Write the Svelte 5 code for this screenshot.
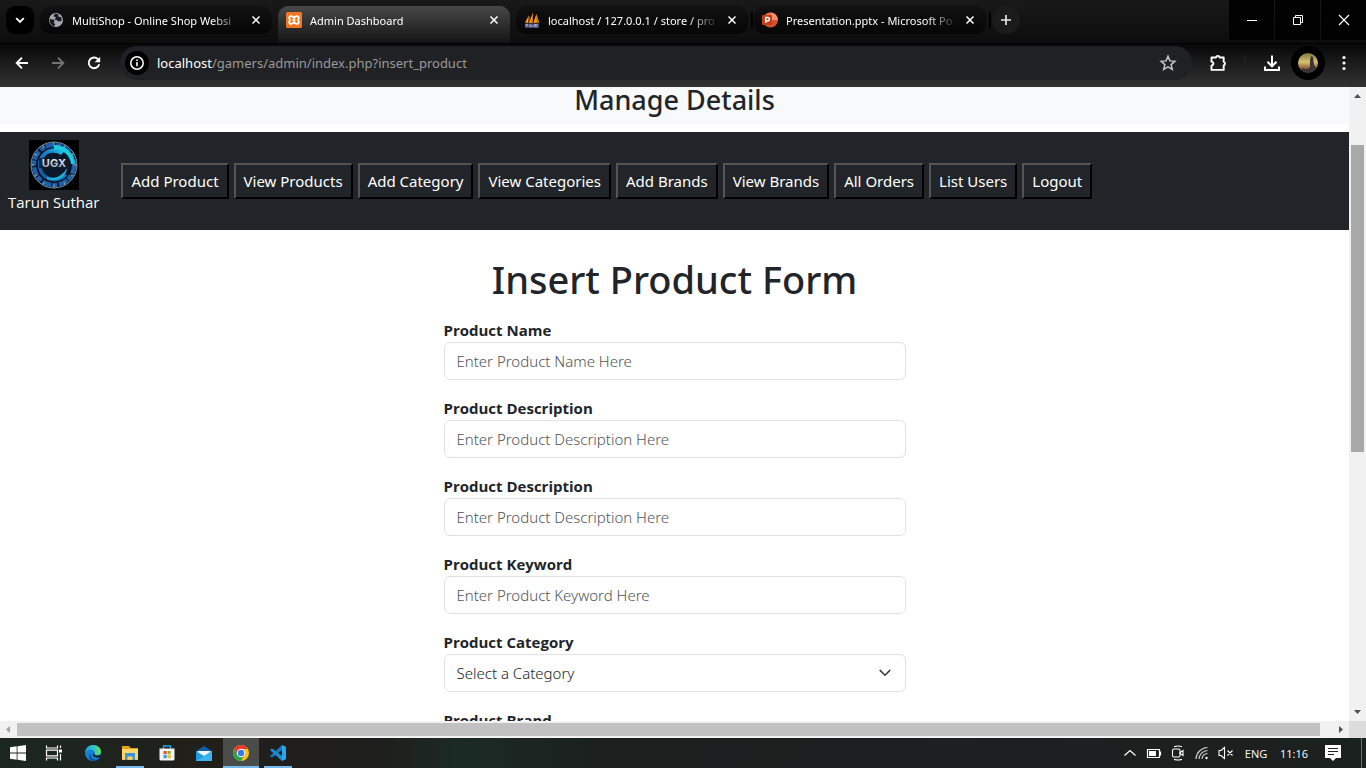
<script>
  const tabs = [
    { icon: 'globe', title: 'MultiShop - Online Shop Websi' },
    { icon: 'xampp', title: 'Admin Dashboard', active: true },
    { icon: 'pma', title: 'localhost / 127.0.0.1 / store / pro' },
    { icon: 'ppt', title: 'Presentation.pptx - Microsoft Po' },
  ];
  const links = [
    'Add Product', 'View Products', 'Add Category', 'View Categories',
    'Add Brands', 'View Brands', 'All Orders', 'List Users', 'Logout',
  ];
  const fields = [
    { id: 'name', label: 'Product Name', hint: 'Enter Product Name Here' },
    { id: 'description', label: 'Product Description', hint: 'Enter Product Description Here' },
    { id: 'details', label: 'Product Description', hint: 'Enter Product Description Here' },
    { id: 'keyword', label: 'Product Keyword', hint: 'Enter Product Keyword Here' },
  ];
  const spokes = [0, 30, 60, 90, 120, 150, 180, 210, 240, 270, 300, 330];
</script>

<div class="window">
  <header class="tabstrip">
    <button class="tab-search" aria-label="Search tabs">
      <svg width="12" height="12" viewBox="0 0 12 12"><path d="M2.2 4.2 6 8l3.800-3.800" fill="none" stroke="#fff" stroke-width="1.900" /></svg>
    </button>
    <div class="tabs">
      {#each tabs as tab}
        <div class="tab" class:active={tab.active}>
          <svg class="favicon" width="16" height="16" viewBox="0 0 16 16">
            {#if tab.icon === 'globe'}
              <circle cx="8" cy="8" r="7" fill="#a4a9b0" />
              <path d="M6.500 1.800c.3 1.300-.9 1.500-1 2.700 1.100.3 2 .1 2.300 1.200.2.900-1.400.9-1.200 2 1.700-.2 2.800.3 3.200 1.500h3.400c.6-1.300.3-3.400-.2-4.400-1 .5-1.800.3-2.400-.4-.7-.8.3-1.600-.8-2.500zM1.800 6.900c1.800.2 4 .4 4.600 1.500.5 1-.3 1.700-.8 2.100.3.9.6 1.200 1.500 1.200l-.3 2.400C3.900 13.500 1.300 11 1.800 6.900z" fill="#17191c" />
            {:else if tab.icon === 'xampp'}
              <rect width="16" height="16" rx="1.500" fill="#f37623" />
              <path d="M8 6.200C7 3.600 3.200 3.300 3.200 5.800c0 1 .7 1.600.7 2.200s-.7 1.200-.7 2.200C3.200 12.700 7 12.400 8 9.800c1 2.600 4.800 2.900 4.800.4 0-1-.7-1.600-.7-2.200s.7-1.200.7-2.200C12.800 3.300 9 3.600 8 6.200z" fill="none" stroke="#fff" stroke-width="1.800" stroke-linejoin="round" />
              <path d="M6.500 8h3" stroke="#fff" stroke-width="1.600" />
            {:else if tab.icon === 'pma'}
              <path d="M1 10.500 4.800 3.500 4 11zM4.800 11 9 .5 8.600 11zM9.300 11 12.300 2l2.900 8.500z" fill="#f89c0e" />
              <path d="M4.800 3.500 6 6l-2 5zM7.300 11 9 .5v10.500zM12.300 2l2.900 8.500h-2.400z" fill="#c06b16" />
              <path d="M.5 11.500h15l-1 4.500H1.500z" fill="#4b5070" />
              <path d="M2 15v-2.500h1.500v1.500M6 12v3M6 13.500h2V15M10 15v-2.500h3V15M11.500 13v2" fill="none" stroke="#a9acd0" stroke-width=".9" />
            {:else}
              <circle cx="8.500" cy="8" r="7.500" fill="#d35230" />
              <path d="M8.500.5A7.500 7.500 0 0 1 16 8H8.500z" fill="#ff8f6b" />
              <path d="M8.500.5A7.500 7.500 0 0 0 1 8h7.500z" fill="#ed6c47" />
              <rect y="3" width="10" height="10" rx="1" fill="#c43e1c" />
              <path d="M3.700 11V5.500h1.800c2.500 0 2.500 3.500 0 3.500H3.700" fill="none" stroke="#fff" stroke-width="1.400" />
            {/if}
          </svg>
          <span class="tab-title">{tab.title}</span>
          <button class="tab-close" aria-label="Close tab">
            <svg width="12" height="12" viewBox="0 0 12 12"><path d="m2.500 2.500 7 7m0-7-7 7" stroke="#fff" stroke-width="1.500" /></svg>
          </button>
        </div>
      {/each}
    </div>
    <button class="new-tab" aria-label="New tab">
      <svg width="14" height="14" viewBox="0 0 14 14"><path d="M7 2v10M2 7h10" stroke="#e6e6e6" stroke-width="1.700" /></svg>
    </button>
    <div class="controls">
      <button aria-label="Minimise"><svg width="12" height="12" viewBox="0 0 12 12"><path d="M1 6.500h10" stroke="#fff" /></svg></button>
      <button aria-label="Restore"><svg width="12" height="12" viewBox="0 0 12 12"><path d="M1.500 3.500h7v7h-7zM3.500 3.500v-2h7v7h-2" fill="none" stroke="#fff" /></svg></button>
      <button aria-label="Close"><svg width="12" height="12" viewBox="0 0 12 12"><path d="m1 1 10 10m0-10L1 11" stroke="#fff" stroke-width="1.200" /></svg></button>
    </div>
  </header>

  <div class="toolbar">
    <div class="history">
      <button aria-label="Back"><svg width="16" height="16" viewBox="0 0 16 16"><path d="M14 8H3M8 2.700 2.700 8 8 13.300" fill="none" stroke="#fff" stroke-width="1.900" /></svg></button>
      <button aria-label="Forward"><svg width="16" height="16" viewBox="0 0 16 16"><path d="M2 8h11M8 2.700 13.300 8 8 13.300" fill="none" stroke="#747474" stroke-width="1.900" /></svg></button>
      <button aria-label="Reload"><svg width="16" height="16" viewBox="0 0 16 16"><path d="M13.200 9.200A5.300 5.300 0 1 1 12 4.300l1.300 1.500" fill="none" stroke="#fff" stroke-width="1.900" /><path d="M14.200 1.700v5.600H8.600z" fill="#fff" /></svg></button>
    </div>
    <div class="omnibox">
      <button class="site-info" aria-label="Site information">
        <svg width="16" height="16" viewBox="0 0 16 16"><circle cx="8" cy="8" r="6.200" fill="none" stroke="#fff" stroke-width="1.500" /><path d="M8 7v4.200M8 4.500v1.600" stroke="#fff" stroke-width="1.600" /></svg>
      </button>
      <span class="url"><b>localhost</b>/gamers/admin/index.php?insert_product</span>
      <button class="bookmark" aria-label="Bookmark this tab">
        <svg width="18" height="18" viewBox="0 0 18 18"><path d="m9 2.200 1.900 4.700 5 .4-3.800 3.300 1.200 4.900L9 12.900l-4.300 2.600 1.200-4.900-3.800-3.300 5-.4z" fill="none" stroke="#c4c4c4" stroke-width="1.500" /></svg>
      </button>
    </div>
    <div class="actions">
      <button aria-label="Extensions"><svg width="20" height="20" viewBox="0 0 20 20"><path d="M3.500 4.500H8a1.900 1.900 0 0 1 3.700 0h4v4.300a1.900 1.900 0 0 1 0 3.600v4.500H3.500v-4.300c2.600-.7 2.600-3.200 0-3.900z" fill="none" stroke="#fff" stroke-width="1.900" stroke-linejoin="round" /></svg></button>
      <span class="divider"></span>
      <button aria-label="Downloads"><svg width="18" height="18" viewBox="0 0 18 18"><path d="M9 1.500V12M4.500 7.800 9 12.300l4.500-4.500M2 12.500V16h14v-3.500" fill="none" stroke="#fff" stroke-width="2" /></svg></button>
      <button class="profile" aria-label="Profile">
        <svg width="20" height="20" viewBox="0 0 20 20">
          <defs>
            <linearGradient id="sky" x2="0" y2="1"><stop offset="0" stop-color="#7b7440" /><stop offset=".45" stop-color="#d9c272" /><stop offset=".75" stop-color="#92643f" /><stop offset="1" stop-color="#35313b" /></linearGradient>
            <clipPath id="disc"><circle cx="10" cy="10" r="10" /></clipPath>
          </defs>
          <g clip-path="url(#disc)"><rect width="20" height="20" fill="url(#sky)" /><path d="M0 16h4l1-1 1 1h4l2-2V7l1-4 2 1 1 8 2 2v6H0z" fill="#3a3436" /></g>
        </svg>
      </button>
      <button aria-label="Menu"><svg width="16" height="16" viewBox="0 0 16 16" fill="#fff"><circle cx="8" cy="2.500" r="1.600" /><circle cx="8" cy="8" r="1.600" /><circle cx="8" cy="13.500" r="1.600" /></svg></button>
    </div>
  </div>

  <div class="viewport">
    <main class="page">
      <h3>Manage Details</h3>
      <nav>
        <a class="user" href="#profile">
          <svg width="50" height="50" viewBox="0 0 50 50">
            <defs>
              <linearGradient id="ring" x1="1" y1="0" x2="0" y2="1"><stop offset="0" stop-color="#22dcee" /><stop offset=".35" stop-color="#1688cb" /><stop offset="1" stop-color="#174a96" /></linearGradient>
              <linearGradient id="metal" x2="0" y2="1"><stop offset="0" stop-color="#fff" /><stop offset="1" stop-color="#8d99a6" /></linearGradient>
            </defs>
            <rect width="50" height="50" fill="#000" />
            <circle cx="25" cy="25" r="23" fill="#0a1c35" stroke="#7d96a5" stroke-width="1" />
            <circle cx="25" cy="25" r="20" fill="none" stroke="#1d5fa8" stroke-width="4.500" stroke-dasharray="9 2 5 1" />
            {#each spokes as angle}
              <path d="M24 2.500h2l-.5 3h-1z" fill="#6e91ab" transform="rotate({angle} 25 25)" />
            {/each}
            <circle cx="25" cy="25" r="17" fill="#0b172b" stroke="#0a0f1c" stroke-width="1.500" />
            <path d="M35 11.500A16.500 16.500 0 1 0 38 35.500l-4-2A12.500 12.500 0 1 1 32 15z" fill="url(#ring)" />
            <path d="M25 5A20 20 0 0 1 46 24h-4A17 17 0 0 0 25 9z" fill="#1fc9dc" />
            <path d="M18 37c9 3 16-2 20-9-1 10-10 14-20 11z" fill="#1eb4d8" />
            <path d="M10 18h30v10H10z" fill="#0d1a2f" opacity=".8" />
            <text x="25" y="27" text-anchor="middle" font-family="Inter, sans-serif" font-size="11" font-weight="700" fill="url(#metal)">UGX</text>
          </svg>
          <span>Tarun Suthar</span>
        </a>
        <div class="menu">
          {#each links as link}
            <button>{link}</button>
          {/each}
        </div>
      </nav>
      <h1>Insert Product Form</h1>
      <form>
        {#each fields as field}
          <div class="field">
            <label for={field.id}>{field.label}</label>
            <input id={field.id} type="text" placeholder={field.hint} />
          </div>
        {/each}
        <div class="field">
          <label for="category">Product Category</label>
          <div class="select">
            <select id="category"><option>Select a Category</option></select>
            <svg width="16" height="16" viewBox="0 0 16 16"><path d="m2.500 5 5.500 5.500L13.500 5" fill="none" stroke="#343a40" stroke-width="1.700" stroke-linecap="round" stroke-linejoin="round" /></svg>
          </div>
        </div>
        <div class="field">
          <label for="brand">Product Brand</label>
          <div class="select">
            <select id="brand"><option>Select a Brand</option></select>
          </div>
        </div>
      </form>
    </main>
    <div class="vscroll">
      <svg width="17" height="17" viewBox="0 0 17 17"><path d="M5 11h7L8.500 7z" fill="#505050" /></svg>
      <div class="vtrack"><div class="vthumb"></div></div>
      <svg width="17" height="17" viewBox="0 0 17 17"><path d="M5 6h7l-3.500 4z" fill="#505050" /></svg>
    </div>
  </div>
  <div class="hscroll">
    <svg width="17" height="17" viewBox="0 0 17 17"><path d="M10 5v7L6 8.500z" fill="#a3a3a3" /></svg>
    <div class="htrack"></div>
    <svg width="29" height="17" viewBox="0 0 29 17"><path d="M19 5v7l4-3.500z" fill="#505050" /></svg>
    <span class="corner"></span>
  </div>

  <footer class="taskbar">
    <div class="system">
      <button aria-label="Start"><svg width="16" height="16" viewBox="0 0 16 16" fill="#fff"><path d="M0 2.300 6.700 1.300v6.300H0zM7.500 1.200 16 0v7.600H7.500zM0 8.400h6.700v6.300L0 13.700zM7.500 8.400H16V16l-8.500-1.200z" /></svg></button>
      <button aria-label="Task view"><svg width="18" height="16" viewBox="0 0 18 16" fill="none" stroke="#fff" stroke-width="1.200"><path d="M1.500.5V3h11V.5M1.500 15.500V13h11v2.500M1.500 5.200h11v5.600h-11zM15.500.5V3M15.500 9v6.500" /><path d="M14 4.500h3v3h-3z" fill="#fff" stroke="none" /></svg></button>
    </div>
    <div class="apps">
      <button aria-label="Edge">
        <svg width="16" height="16" viewBox="0 0 16 16">
          <defs><linearGradient id="edge" x1="0" x2="1"><stop offset="0" stop-color="#1e9de2" /><stop offset=".55" stop-color="#2fc5c9" /><stop offset="1" stop-color="#6fdb50" /></linearGradient></defs>
          <circle cx="8" cy="8" r="8" fill="#1583d5" />
          <path d="M0 7.500C.5 3 4 0 8.200 0 13 0 16 3.200 16 6.500c0 2.500-1.800 3.800-4 3.800-1.800 0-2.700-.7-2.200-1.600C10.500 7 9 5 6.500 4.800 3.500 4.600 1 5.800 0 7.500z" fill="url(#edge)" />
          <path d="M5.500 8.500c-.5 3.500 2.500 6.500 6 6.200 1.500-.2 2.700-.9 3.500-2C13.500 15 11 16 8.500 16 4.500 16 3 11 5.500 8.500z" fill="#0c4f9a" />
          <path d="M9.800 8.700c-.5.900.5 1.800 2.400 1.800 1.200 0 2.200-.4 2.900-1l.3 2.200c-3 2-8.400.7-7.400-3z" fill="#1c211f" />
        </svg>
      </button>
      <button class="open" aria-label="File Explorer">
        <svg width="16" height="14" viewBox="0 0 16 14"><path d="M0 0h7l1.500 2H16v12H0z" fill="#e8a317" /><path d="M0 3h16v10.500H0z" fill="#ffd667" /><path d="M3 7h10v7h-2.500v-3.500h-5V14H3z" fill="#3b93dc" /></svg>
      </button>
      <button aria-label="Store">
        <svg width="16" height="16" viewBox="0 0 16 16"><path d="M4.500 4V1h7v3" fill="none" stroke="#25a9e8" stroke-width="1.300" /><path d="M.5 3.500h15V14q0 1.500-1.500 1.500H2Q.5 15.500.5 14z" fill="#f3f3f3" /><path d="M4.500 6h3.200v3.200H4.500z" fill="#e8502c" /><path d="M8.500 6h3.200v3.200H8.500z" fill="#7bb82a" /><path d="M4.500 10h3.200v3.200H4.500z" fill="#25a4e5" /><path d="M8.500 10h3.200v3.200H8.500z" fill="#fab813" /></svg>
      </button>
      <button aria-label="Mail">
        <svg width="16" height="15" viewBox="0 0 16 15"><path d="m0 5 8-5 8 5v10H0z" fill="#0e5da8" /><path d="M1.500 5h13v7h-13z" fill="#f2f6fa" /><path d="m0 5 8 5 8-5v10H0z" fill="#1f9be5" /><path d="m0 15 11.500-7L16 5v10z" fill="#38b5f1" /></svg>
      </button>
      <button class="open current" aria-label="Chrome">
        <svg width="16" height="16" viewBox="0 0 16 16"><circle cx="8" cy="8" r="8" fill="#fbc116" /><path d="M1.070 4A8 8 0 0 1 14.930 4H8L4.540 10z" fill="#e33b2e" /><path d="M1.070 4A8 8 0 0 0 8 16l3.460-6H4.540z" fill="#2da44e" /><circle cx="8" cy="8" r="4.200" fill="#fff" /><circle cx="8" cy="8" r="3.200" fill="#3b78e7" /></svg>
      </button>
      <button class="open" aria-label="Visual Studio Code">
        <svg width="16" height="16" viewBox="0 0 16 16"><path d="M12 0v5L3 12 1.500 12.300 0 11z" fill="#1279bd" /><path d="M12 16v-5L3 4l-1.500-.3L0 5z" fill="#1c8bd0" /><path d="m12 0 4 1.800v12.400L12 16z" fill="#2aa6f0" /></svg>
      </button>
    </div>
    <div class="tray">
      <button aria-label="Hidden icons"><svg width="14" height="14" viewBox="0 0 14 14"><path d="m1.500 9.500 5.500-5 5.500 5" fill="none" stroke="#fff" stroke-width="1.200" /></svg></button>
      <button aria-label="Battery"><svg width="16" height="12" viewBox="0 0 16 12"><path d="M1.500 2.500h12v8h-12zM14.500 4.500v4" fill="none" stroke="#fff" stroke-width="1.200" /><path d="M3 4h7v5H3z" fill="#fff" /></svg></button>
      <button aria-label="Meet now"><svg width="14" height="16" viewBox="0 0 14 16" fill="none" stroke="#fff" stroke-width="1.100"><path d="M3 1.800q4-1.600 8 0M3 14.200q4 1.600 8 0" /><rect x="1.500" y="4" width="7.500" height="8" rx="1.500" /><path d="m9 7.500 3-2v5l-3-2z" /></svg></button>
      <button aria-label="Network"><svg width="14" height="14" viewBox="0 0 14 14" fill="none" stroke="#c6c9c8" stroke-width="1.200"><path d="M1 13A12 12 0 0 1 12.500 1.500M4 13a9 9 0 0 1 8.500-8.500M7 13a6 6 0 0 1 5.500-5.500" /><circle cx="11.500" cy="12" r="1.200" fill="#fff" stroke="none" /></svg></button>
      <button aria-label="Volume muted"><svg width="16" height="14" viewBox="0 0 16 14" fill="none" stroke="#fff" stroke-width="1.100"><path d="M1 4.500h2l3.500-3v11l-3.500-3H1zM9.500 4.500l5 5m0-5-5 5" /></svg></button>
      <button class="lang">ENG</button>
      <button class="clock">11:16</button>
      <button class="notes" aria-label="Notifications"><svg width="16" height="16" viewBox="0 0 16 16"><path d="M0 0h16v13h-5l-3 3-3-3H0z" fill="#fff" /><path d="M3 3.500h10M3 6.500h10M3 9.500h6" stroke="#222" stroke-width="1.100" /></svg></button>
      <span class="peek"></span>
    </div>
  </footer>
</div>

<style>
  :global(body) { margin: 0; }
  .window { display: flex; flex-direction: column; height: 100vh; overflow: hidden; font-family: "Open Sans", sans-serif; background: #fff; }
  .window, .window * { box-sizing: border-box; }
  button { display: flex; align-items: center; justify-content: center; padding: 0; border: 0; background: none; color: #fff; font: inherit; white-space: nowrap; }
  svg { display: block; flex: none; }

  .tabstrip { display: flex; flex: none; height: 44px; padding: 6px 0 0 6px; background: linear-gradient(#191919, #0d0d0d); border-bottom: 1px solid #000; }
  .tab-search { flex: none; width: 28px; height: 28px; border-radius: 9px; background: #000; }
  .tabs { display: flex; gap: 6px; margin-left: 6px; }
  .tab { position: relative; display: flex; align-items: center; gap: 8px; width: 232px; height: 28px; padding: 0 8px; border-radius: 10px; background: linear-gradient(#111, #060606); color: #fff; }
  .tab:nth-child(n+3)::after { content: ""; position: absolute; right: -5px; top: 6px; width: 2px; height: 16px; background: #000; }
  .tab.active { height: 37px; padding-bottom: 9px; border-radius: 10px 10px 0 0; background: linear-gradient(#484848, #141414); }
  .tab-title { flex: 1; overflow: hidden; white-space: nowrap; font-family: "Noto Sans", sans-serif; font-size: 11px; mask-image: linear-gradient(90deg, #000 140px, transparent 172px); }
  .tab-close { flex: none; width: 16px; height: 16px; }
  .new-tab { flex: none; width: 28px; height: 28px; margin-left: 6px; border-radius: 14px; background: #1b1b1b; }
  .controls { display: flex; gap: 1px; height: 40px; margin: -6px 0 0 auto; }
  .controls button { width: 45px; height: 40px; background: #020202; }

  .toolbar { display: flex; flex: none; align-items: center; height: 43px; padding: 0 4px 5px; background: linear-gradient(#080808, #333); }
  .history { display: flex; width: 116px; }
  .history button { width: 36px; height: 34px; }
  .omnibox { display: flex; flex: 1; align-items: center; height: 34px; padding: 0 12px 0 5px; border-radius: 17px; background: #202124; }
  .site-info { width: 24px; height: 24px; border-radius: 12px; background: #000; }
  .url { flex: 1; margin-left: 8px; color: #9a9a9a; font-family: "Noto Sans", sans-serif; font-size: 13px; white-space: nowrap; }
  .url b { color: #fff; font-weight: 400; }
  .bookmark { width: 24px; height: 24px; }
  .actions { display: flex; align-items: center; margin-left: 8px; }
  .actions button { width: 36px; height: 34px; }
  .actions .profile { width: 34px; margin: 0 1px; border-radius: 17px; background: #000; }
  .divider { width: 2px; height: 16px; margin: 0 8px; background: #202020; }

  .viewport { display: flex; flex: 1; min-height: 0; }
  .page { flex: 1; min-width: 0; overflow: hidden; color: #212529; font-size: 15px; }
  h1, h3 { font-family: "Noto Sans", sans-serif; font-weight: 500; text-align: center; }
  h3 { margin: 0 0 8px; padding-bottom: 11px; background: #f8f9fa; font-size: 27px; line-height: 26px; }
  nav { display: flex; align-items: center; gap: 22px; height: 98px; padding: 0 8px; background: #212529; }
  .user { display: flex; flex-direction: column; align-items: center; height: 82px; color: #fff; line-height: 24px; text-decoration: none; white-space: nowrap; }
  .menu { display: flex; gap: 5px; }
  .menu button { height: 36px; padding: 0 8px; border: 2px outset #000; border-color: #555 #000 #000 #555; font-family: "Noto Sans", sans-serif; }
  h1 { margin: 25px 0 15px; font-size: 38px; line-height: 48px; }
  form { width: 100%; max-width: 462px; margin: 0 auto; }
  .field { margin-bottom: 16px; }
  label { display: block; font-weight: 700; line-height: 24px; }
  input, select { display: block; width: 100%; height: 38px; padding: 0 12px; border: 1px solid #dee2e6; border-radius: 6px; background: #fff; color: #212529; font: 300 15px "Noto Sans", sans-serif; appearance: none; }
  input::placeholder { color: #4f5459; opacity: 1; }
  .select { position: relative; }
  .select svg { position: absolute; right: 14px; top: 11px; width: 14px; pointer-events: none; }

  .vscroll { display: flex; flex-direction: column; width: 17px; background: #f1f1f1; }
  .vtrack { flex: 1; padding: 41px 2px 0; }
  .vthumb { height: 55%; background: #a8a8a8; }
  .hscroll { display: flex; flex: none; height: 17px; background: #f1f1f1; }
  .htrack { flex: 1; margin: 2px 0; background: #c1c1c1; }
  .corner { width: 17px; background: #dcdcdc; }

  .taskbar { display: flex; flex: none; align-items: stretch; height: 30px; background: linear-gradient(90deg, #1c2722, #211f1a 15%, #1f1f1d 28%, #1b2a25 34%, #1b1f1e 45%, #1c2020 75%, #1b211e); }
  .system, .apps, .tray { display: flex; }
  .system button, .apps button { width: 36px; }
  .apps { gap: 1px; margin-left: 3px; }
  .apps .open { background: linear-gradient(#76b9ed, #76b9ed) bottom / 28px 2px no-repeat; }
  .apps .current { background: linear-gradient(#76b9ed, #76b9ed) bottom / 100% 2px no-repeat #4a4c4a; }
  .tray { margin-left: auto; }
  .tray button { width: 24px; font-size: 11px; }
  .tray .lang { width: 36px; }
  .tray .clock { width: 40px; }
  .tray .notes { width: 38px; }
  .peek { width: 5px; margin-left: 9px; border-left: 1px solid #6b6f6d; }
</style>
